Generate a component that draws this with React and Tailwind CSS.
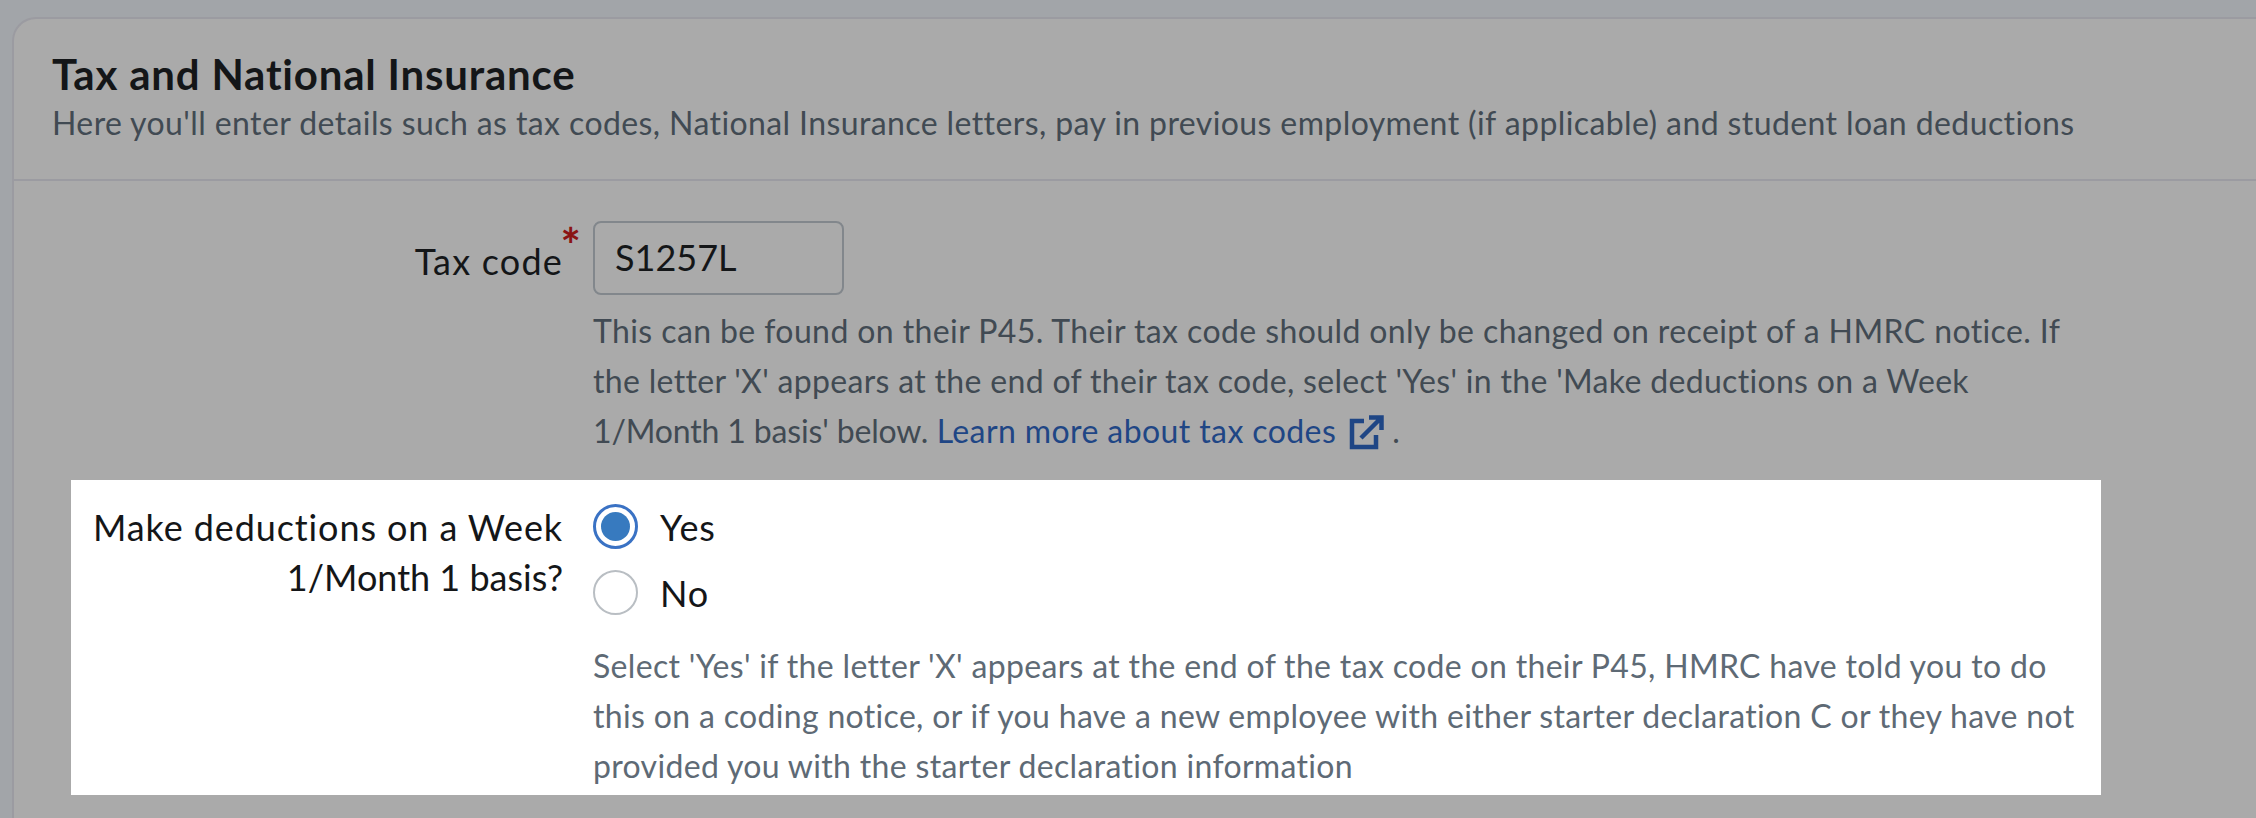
export default function App() {
  return (
    <div className="h-[818px] w-[2256px] overflow-hidden bg-[#a2a5a9] pl-3 pt-[17px] font-['Lato',sans-serif]">
      <div className="h-[900px] w-[2400px] rounded-tl-[24px] border-l-2 border-t-2 border-[#9b9ba1] bg-[#aaaaaa]">
        <div className="h-[162px] border-b-2 border-[#9b9ba1] pl-[38px] pt-[31px]">
          <h1 className="text-[42px] font-bold leading-[48px] tracking-[0.8px] text-[#141618]">Tax and National Insurance</h1>
          <p className="mt-[5px] text-[32px] leading-[40px] tracking-[0.4px] text-[#414a53]">
            Here you'll enter details such as tax codes, National Insurance letters, pay in previous employment (if applicable) and student loan deductions
          </p>
        </div>
        <div className="flex pl-[57px] pt-10">
          <div className="flex w-[522px] justify-end pr-[30px] pt-[15px]">
            <span className="relative text-[36px] leading-[50px] tracking-[1.2px] text-[#141618]">
              Tax code
              <span className="absolute -right-[19px] -top-[15px] text-[48px] font-bold leading-[48px] text-[#8a1414]">*</span>
            </span>
          </div>
          <div>
            <div className="flex h-[74px] w-[251px] items-center rounded-lg border-2 border-[#82878c] pb-[2px] pl-5 text-[36px] text-[#141618]">S1257L</div>
            <p className="mt-[11px] whitespace-nowrap text-[32px] leading-[50px] tracking-[0.4px] text-[#414a53]">
              This can be found on their P45. Their tax code should only be changed on receipt of a HMRC notice. If
              <br />
              <span className="tracking-[0.32px]">the letter 'X' appears at the end of their tax code, select 'Yes' in the 'Make deductions on a Week</span>
              <br />
              <span className="tracking-[-0.15px]">1/Month 1 basis' below.</span>{" "}
              <a className="text-[#1f4685]">Learn more about tax codes</a>
              <svg className="ml-[13px] mr-[8px] inline-block h-[35px] w-[35px] align-[-7px] text-[#1f4685]" viewBox="0 0 35 35" fill="none" stroke="currentColor" strokeWidth="4.5">
                <path d="M15 6H3v26h24V20" />
                <path d="M12 23 31 4M20 2.5h12.5V15" />
              </svg>
              .
            </p>
          </div>
        </div>
        <div className="ml-[57px] mt-[24px] flex h-[315px] w-[2030px] bg-white">
          <div className="w-[522px] pr-[30px] pt-[22px] text-right text-[36px] leading-[50px] tracking-[0.9px] text-[#141618]">
            Make deductions on a Week
            <br />
            <span className="tracking-normal">1/Month 1 basis?</span>
          </div>
          <div className="pt-[24px]">
            <div className="flex h-[45px] items-center gap-[22px] text-[36px] tracking-[0.9px] text-[#141618]">
              <span className="flex h-[45px] w-[45px] items-center justify-center rounded-full border-[3px] border-[#3a72c4] bg-white">
                <span className="h-[29px] w-[29px] rounded-full bg-[#377abf]" />
              </span>
              Yes
            </div>
            <div className="mt-[21px] flex h-[45px] items-center gap-[22px] text-[36px] tracking-[0.9px] text-[#141618]">
              <span className="h-[45px] w-[45px] rounded-full border-2 border-[#b9bec3] bg-white" />
              No
            </div>
            <p className="mt-[26px] whitespace-nowrap text-[32px] leading-[50px] tracking-[0.33px] text-[#5e6a75]">
              Select 'Yes' if the letter 'X' appears at the end of the tax code on their P45, HMRC have told you to do
              <br />
              this on a coding notice, or if you have a new employee with either starter declaration C or they have not
              <br />
              provided you with the starter declaration information
            </p>
          </div>
        </div>
      </div>
    </div>
  );
}
